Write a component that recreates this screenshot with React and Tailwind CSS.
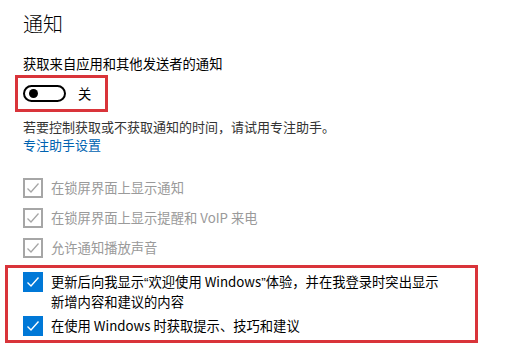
const FONT = { fontFamily: '"Segoe UI", "Noto Sans CJK SC", "Noto Sans", sans-serif' };
const Q = ({ children }) => (
  <span style={{ fontFamily: '"Liberation Sans", sans-serif' }}>{children}</span>
);

function Check({ checked, disabled }) {
  if (disabled) {
    return (
      <span className="flex h-[20px] w-[20px] shrink-0 items-center justify-center border-2 border-[#a6a6a6] bg-white">
        <svg width="14" height="14" viewBox="0 0 14 14" fill="none">
          <path d="M1.5 7.5 L5 11 L12.5 2.5" stroke="#a6a6a6" strokeWidth="1.3" />
        </svg>
      </span>
    );
  }
  return (
    <span className="flex h-[20px] w-[20px] shrink-0 items-center justify-center bg-[#0078d7]">
      {checked && (
        <svg width="14" height="14" viewBox="0 0 14 14" fill="none">
          <path d="M1.5 7.5 L5 11 L12.5 2.5" stroke="#ffffff" strokeWidth="1.4" />
        </svg>
      )}
    </span>
  );
}

function Row({ disabled, children }) {
  return (
    <div className="flex items-start gap-[8px]">
      <Check checked disabled={disabled} />
      <span
        className={
          "whitespace-nowrap text-[13.3px] leading-[19px] " +
          (disabled ? "text-[#9a9a9a]" : "text-black")
        }
      >
        {children}
      </span>
    </div>
  );
}

export default function App() {
  return (
    <div className="h-[350px] w-[518px] overflow-hidden bg-white" style={FONT}>
      <div className="pl-[23px] pt-[10px]">
        <h1 className="text-[20px] font-light leading-[28px] text-black">通知</h1>

        <p className="mt-[16px] text-[13.3px] leading-[19px] text-black">
          获取来自应用和其他发送者的通知
        </p>

        <div className="-ml-[8px] mt-[2px] flex h-[37px] w-[93px] items-center border-[3px] border-[#d9343a] pl-[5px]">
          <span className="flex h-[17px] w-[43px] items-center rounded-full border-2 border-black pl-[4px]">
            <span className="h-[9px] w-[9px] rounded-full bg-black" />
          </span>
          <span className="ml-[12px] text-[13.3px] leading-[19px] text-black">关</span>
        </div>

        <p className="mt-[6px] text-[13px] leading-[18px] text-[#333333]">
          若要控制获取或不获取通知的时间，请试用专注助手。
        </p>
        <p className="text-[13px] leading-[18px] text-[#0063b1]">专注助手设置</p>

        <div className="mt-[24px] flex flex-col gap-[10px]">
          <Row disabled>在锁屏界面上显示通知</Row>
          <Row disabled>在锁屏界面上显示提醒和 VoIP 来电</Row>
          <Row disabled>允许通知播放声音</Row>
        </div>

        <div className="-ml-[18px] mt-[7px] flex w-[473px] flex-col gap-[5px] border-[3px] border-[#d9343a] pb-[4px] pl-[15px] pt-[4px]">
          <Row>
            更新后向我显示<Q>“</Q>欢迎使用 Windows<Q>”</Q>体验，并在我登录时突出显示
            <br />
            新增内容和建议的内容
          </Row>
          <Row>在使用 Windows 时获取提示、技巧和建议</Row>
        </div>
      </div>
    </div>
  );
}
